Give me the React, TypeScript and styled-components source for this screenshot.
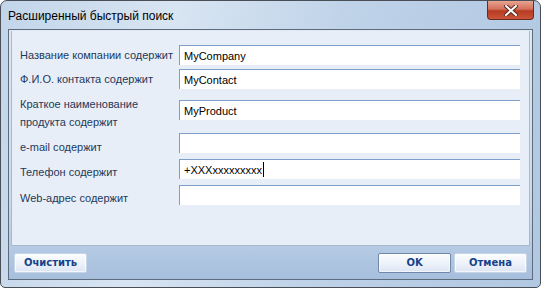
import React from 'react';
import styled, { createGlobalStyle } from 'styled-components';

const GlobalStyle = createGlobalStyle`
  html, body {
    margin: 0;
    padding: 0;
    background: #ffffff;
  }
  body {
    font-family: "Liberation Sans", Arial, sans-serif;
  }
`;

const Window = styled.div`
  box-sizing: border-box;
  width: 541px;
  height: 288px;
  border: 1px solid #4a4f57;
  border-radius: 7px 7px 5px 5px;
  background: linear-gradient(100deg, #c2d5ea 0%, #d8e5f2 30%, #bed2e8 60%, #b1c8e2 100%);
  display: flex;
  flex-direction: column;
  overflow: hidden;
`;

const TitleBar = styled.div`
  height: 28px;
  display: flex;
  justify-content: space-between;
  align-items: flex-start;
  padding: 0 6px 0 7px;
`;

const Title = styled.div`
  font-size: 12px;
  color: #000;
  line-height: 16px;
  padding-top: 7px;
`;

const CloseButton = styled.div`
  width: 45px;
  height: 18px;
  border: 1px solid #6d2b20;
  border-top: none;
  border-radius: 0 0 4px 4px;
  background: linear-gradient(#e8a491 0%, #d2705a 45%, #b83a22 55%, #c8553a 100%);
  display: flex;
  align-items: center;
  justify-content: center;
`;

const Client = styled.div`
  flex: 1;
  margin: 0 7px 7px;
  border: 1px solid #5d6b7c;
  display: flex;
  flex-direction: column;
  background: linear-gradient(#dfe8f3 0%, #c9d9ec 70%, #a6bfdd 100%);
`;

const Panel = styled.div`
  height: 215px;
  box-sizing: border-box;
  margin: 1px 2px 0 2px;
  background: #e8eef7;
  border: 1px solid #a9b9cc;
  border-top: none;
  padding: 14px 9px 0 8px;
  display: flex;
  flex-direction: column;
`;

const Row = styled.div<{ $tall?: boolean; $gap: number }>`
  display: grid;
  grid-template-columns: 159px 1fr;
  align-items: ${(p) => (p.$tall ? 'start' : 'center')};
  margin-top: ${(p) => p.$gap}px;
`;

const Label = styled.div<{ $tall?: boolean; $shift: number }>`
  font-size: 11px;
  color: #1e395b;
  line-height: ${(p) => (p.$tall ? '18px' : '20px')};
  white-space: nowrap;
  transform: translateY(${(p) => p.$shift}px);
`;

const Field = styled.div<{ $tall?: boolean }>`
  box-sizing: border-box;
  height: 20px;
  margin-top: ${(p) => (p.$tall ? '5px' : '0')};
  background: #fff;
  border-top: 1px solid #7f9fcb;
  border-left: 1px solid #7f9fcb;
  font-family: "Liberation Sans", Arial, sans-serif;
  font-size: 11px;
  color: #000;
  line-height: 18px;
  padding-left: 4px;
  display: flex;
  align-items: center;
`;

const Caret = styled.span`
  display: inline-block;
  width: 1px;
  height: 15px;
  background: #000;
  margin-left: 1px;
`;

const Footer = styled.div`
  flex: 1;
  display: flex;
  align-items: center;
  padding: 0 5px 0 5px;
  gap: 3px;
`;

const Spacer = styled.div`
  flex: 1;
`;

const Button = styled.div<{ $pressed?: boolean }>`
  box-sizing: border-box;
  width: 73px;
  height: 20px;
  border: 1px solid ${(p) => (p.$pressed ? '#7288a8' : '#c7d5e6')};
  border-radius: 2px;
  background: linear-gradient(#fbfcfe 0%, #eef3fa 50%, #dbe5f2 100%);
  box-shadow: inset 0 0 0 1px #ffffffaa;
  font-family: "DejaVu Sans", Tahoma, sans-serif;
  font-size: 10px;
  font-weight: bold;
  color: #15428b;
  display: flex;
  align-items: center;
  justify-content: center;
`;

const rows: {
  label: React.ReactNode;
  value: string;
  tall?: boolean;
  caret?: boolean;
  gap: number;
  shift: number;
}[] = [
  { label: 'Название компании содержит', value: 'MyCompany', gap: 0, shift: 0 },
  { label: 'Ф.И.О. контакта содержит', value: 'MyContact', gap: 4, shift: 0 },
  {
    label: (
      <>
        Краткое наименование
        <br />
        продукта содержит
      </>
    ),
    value: 'MyProduct',
    tall: true,
    gap: 6,
    shift: 0,
  },
  { label: 'e-mail содержит', value: '', gap: 2, shift: 4 },
  { label: 'Телефон содержит', value: '+XXXxxxxxxxxx', caret: true, gap: 6, shift: 3 },
  { label: 'Web-адрес содержит', value: '', gap: 6, shift: 3 },
];

export default function App() {
  return (
    <>
      <GlobalStyle />
      <Window>
        <TitleBar>
          <Title>Расширенный быстрый поиск</Title>
          <CloseButton>
            <svg width="14" height="11" viewBox="0 0 14 11">
              <path
                d="M2 1 L12 10 M12 1 L2 10"
                stroke="#5a2a22"
                strokeWidth="4"
                strokeLinecap="square"
              />
              <path
                d="M2 1 L12 10 M12 1 L2 10"
                stroke="#ffffff"
                strokeWidth="2"
                strokeLinecap="square"
              />
            </svg>
          </CloseButton>
        </TitleBar>
        <Client>
          <Panel>
            {rows.map((r, i) => (
              <Row key={i} $tall={r.tall} $gap={r.gap}>
                <Label $tall={r.tall} $shift={r.shift}>
                  {r.label}
                </Label>
                <Field $tall={r.tall}>
                  {r.value}
                  {r.caret && <Caret />}
                </Field>
              </Row>
            ))}
          </Panel>
          <Footer>
            <Button>Очистить</Button>
            <Spacer />
            <Button $pressed>OK</Button>
            <Button>Отмена</Button>
          </Footer>
        </Client>
      </Window>
    </>
  );
}
